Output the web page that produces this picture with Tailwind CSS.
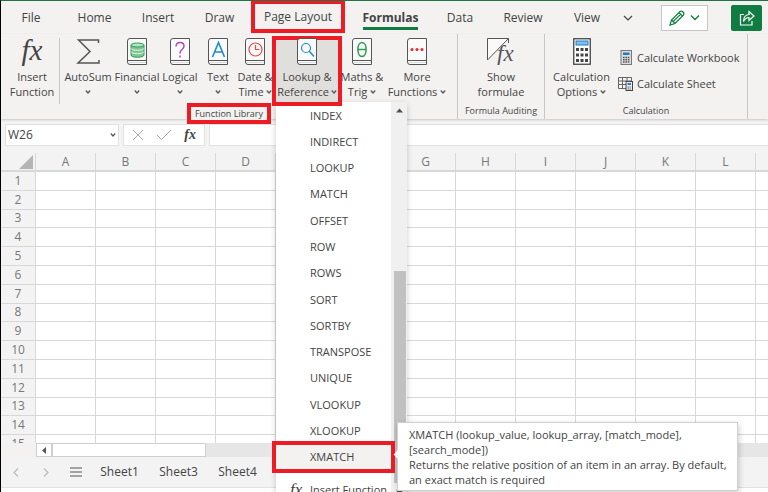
<!DOCTYPE html>
<html lang="en">
  <head>
    <meta charset="UTF-8" />
    <meta name="viewport" content="width=device-width, initial-scale=1.0" />
    <title>Formulas</title>
    <script src="https://cdn.jsdelivr.net/npm/@tailwindcss/browser@4"></script>
  </head>
  <body class="bg-white">
    <!-- shared icon shapes -->
    <svg class="hidden">
      <symbol id="book" viewBox="0 0 20 27">
        <path d="M19.500 .5H3Q.5 .5 .5 3V24Q.5 26.500 3 26.500H19.500Z" fill="#fafafa" stroke="#555" />
        <path d="M1 22.500H19.500" stroke="#555" fill="none" />
        <path d="M2 24.500H19" stroke="#ddd" fill="none" />
      </symbol>
      <symbol id="chev" viewBox="0 0 6 6">
        <path d="M.8 1.500L3 4L5.200 1.500" fill="none" stroke="#555" stroke-width="1.200" />
      </symbol>
    </svg>

    <main
      class="flex h-screen flex-col overflow-hidden border-t border-l border-t-[#217346] border-l-black bg-[#f3f2f1] font-['Open_Sans','Noto_Sans',sans-serif] text-[11px] text-[#444]"
    >
      <!-- tabs -->
      <nav class="flex h-[33px] shrink-0 items-center text-[12px]">
        <button class="w-[60px]">File</button>
        <button class="w-[67px]">Home</button>
        <button class="w-[60px]">Insert</button>
        <button class="w-[63px]">Draw</button>
        <button class="-mt-px h-[33px] w-[94px] self-start border-4 border-[#ed1c24]">Page Layout</button>
        <button class="relative w-[91px] font-bold">
          Formulas
          <span class="absolute -bottom-[3px] left-[18px] h-[3px] w-[55px] bg-[#107c41]"></span>
        </button>
        <button class="w-[48px]">Data</button>
        <button class="w-[78px]">Review</button>
        <button class="w-[50px]">View</button>
        <button class="flex w-[32px] justify-center" aria-label="More tabs">
          <svg class="h-2 w-3" viewBox="0 0 12 8"><path d="M2 2L6 6L10 2" fill="none" stroke="#444" stroke-width="1.200" /></svg>
        </button>
        <div class="ml-auto flex gap-[23px] pr-[6px]">
          <button class="flex h-[26px] w-[47px] items-center justify-center gap-[5px] border border-[#c8c6c4] bg-white" aria-label="Editing">
            <svg class="size-4" viewBox="0 0 16 16" fill="none" stroke="#107c41" stroke-width="1.200">
              <path d="M1 15L2.500 10L11 1.500Q12.500 .5 14 2Q15.500 3.500 14.500 5L6 13.500Z" />
              <path d="M2.500 10L6 13.500M4 11.800L12.300 3.600M10 2.600L13.500 6.100" />
            </svg>
            <svg class="h-[7px] w-[10px]" viewBox="0 0 10 7"><path d="M1 1.500L5 5.500L9 1.500" fill="none" stroke="#107c41" stroke-width="1.400" /></svg>
          </button>
          <button class="flex h-[26px] w-[31px] items-center justify-center rounded-[2px] bg-[#107c41]" aria-label="Share">
            <svg class="size-4" viewBox="0 0 16 16" fill="none" stroke="#fff" stroke-width="1.200">
              <path d="M5 4.500H1.500V15H13V11" />
              <path d="M4.500 11.500Q4.500 5 10 4.500V1.500L15 6L10 10.500V7.500Q6.500 7.500 4.500 11.500Z" />
            </svg>
          </button>
        </div>
      </nav>

      <!-- ribbon -->
      <section class="relative z-10 flex h-[85px] shrink-0 bg-[#f3f2f1] leading-[15px] shadow-[0_1px_2px_#c8c8c8]">
        <div class="flex w-[456px] flex-col items-center">
          <div class="flex h-[70px] w-full">
            <button class="flex w-[58px] flex-col items-center pt-[4px] pl-1">
              <span class="mb-1 h-[27px] font-['Liberation_Serif',serif] text-[29px] leading-[24px] italic">fx</span>
              Insert<br />Function
            </button>
            <span class="mt-1 h-[66px] w-px bg-[#c8c6c4]"></span>
            <button class="flex w-[56px] flex-col items-center pt-[4px]">
              <svg class="mb-1 h-[27px] w-6 shrink-0" viewBox="0 0 24 27"><path d="M22.500 5V2H2.500L14 13.500L2 25H23V22" fill="none" stroke="#555" stroke-width="1.500" /></svg>
              AutoSum
              <svg class="mt-[5px] size-[6px]"><use href="#chev" /></svg>
            </button>
            <button class="flex w-[42px] flex-col items-center pt-[4px]">
              <svg class="mb-1 h-[27px] w-5 shrink-0" viewBox="0 0 20 27">
                <use href="#book" />
                <path d="M4 7V17C4 20 17 20 17 17V7" fill="#7fc795" stroke="#2f9e51" />
                <ellipse cx="10.500" cy="7" rx="6.500" ry="2" fill="#b9e2c4" stroke="#2f9e51" />
                <path d="M4 10.300C4 13 17 13 17 10.300M4 13.600C4 16.300 17 16.300 17 13.600" fill="none" stroke="#e6f5ea" />
              </svg>
              Financial
              <svg class="mt-[5px] size-[6px]"><use href="#chev" /></svg>
            </button>
            <button class="flex w-[44px] flex-col items-center pt-[4px]">
              <svg class="mb-1 h-[27px] w-5 shrink-0" viewBox="0 0 20 27">
                <use href="#book" />
                <path d="M6 8.500Q6.200 4.500 10 4.500Q14 4.500 14 8Q14 10 12 11.500Q10 13 10 15.500M10 17.500V19.500" fill="none" stroke="#b146c2" stroke-width="1.500" />
              </svg>
              Logical
              <svg class="mt-[5px] size-[6px]"><use href="#chev" /></svg>
            </button>
            <button class="flex w-[32px] flex-col items-center pt-[4px]">
              <svg class="mb-1 h-[27px] w-5 shrink-0" viewBox="0 0 20 27">
                <use href="#book" />
                <path d="M4.500 19L10.500 4.500L16.500 19M6.500 14H14.500" fill="none" stroke="#1e8bcd" stroke-width="1.600" />
              </svg>
              Text
              <svg class="mt-[5px] size-[6px]"><use href="#chev" /></svg>
            </button>
            <button class="flex w-[42px] flex-col items-center pt-[4px]">
              <svg class="mb-1 h-[27px] w-5 shrink-0" viewBox="0 0 20 27">
                <use href="#book" />
                <circle cx="10.500" cy="11.500" r="6.500" fill="none" stroke="#e8484c" stroke-width="1.200" />
                <path d="M10.500 7V11.500H14.500" fill="none" stroke="#e8484c" stroke-width="1.200" />
              </svg>
              <span class="whitespace-nowrap">Date &amp;</span>
              <span class="flex items-center gap-[2px]">Time <svg class="size-[6px]"><use href="#chev" /></svg></span>
            </button>
            <div class="relative z-20 -mr-1 ml-[-4px] w-[70px]">
              <button class="mt-[2px] flex h-[70px] w-full flex-col items-center border-4 border-[#ed1c24] bg-[#e1dfdd]">
                <svg class="-mt-[2px] mb-1 h-[27px] w-5 shrink-0" viewBox="0 0 20 27">
                  <use href="#book" />
                  <circle cx="9" cy="10" r="4.500" fill="none" stroke="#1e8bcd" stroke-width="1.200" />
                  <path d="M12.300 13.300L17 18.500" stroke="#1e8bcd" stroke-width="1.500" />
                </svg>
                <span class="whitespace-nowrap">Lookup &amp;</span>
                <span class="flex items-center gap-[2px]">Reference <svg class="size-[6px]"><use href="#chev" /></svg></span>
              </button>

              <!-- lookup menu -->
              <div class="absolute top-[68px] left-1 -z-10 flex w-[131px] bg-white text-[11px] shadow-[0_2px_6px_#0003]">
                <div class="w-[115px]">
                  <ul class="grid h-[368px] auto-rows-fr" id="menu"></ul>
                  <div class="mx-2 mt-[2px] border-b border-[#d2d0ce]"></div>
                  <button class="flex h-[32px] w-full items-center pl-[14px] whitespace-nowrap">
                    <span class="w-5 text-left font-['Liberation_Serif',serif] text-[17px] italic">fx</span>Insert Function
                  </button>
                </div>
                <div class="flex w-4 flex-col items-center bg-[#f0f0f0] pl-px">
                  <svg class="mt-[6px] h-[5px] w-[7px]" viewBox="0 0 7 5"><path d="M0 4.500L3.500 .5L7 4.500Z" fill="#505050" /></svg>
                  <div class="mt-[158px] h-[212px] w-3 bg-[#c1c1c1]"></div>
                  <svg class="mt-[7px] h-[5px] w-[7px]" viewBox="0 0 7 5"><path d="M0 .5L3.500 4.500L7 .5Z" fill="#505050" /></svg>
                </div>

                <div role="tooltip" class="absolute top-[320px] left-[121px] h-[69px] w-[341px] border border-[#d2d0ce] bg-white pt-1 pl-[11px] whitespace-nowrap shadow-[1px_2px_6px_#0003]">
                  <span class="absolute top-[28px] -left-[3px] size-[7px] rotate-45 bg-white"></span>
                  <p>XMATCH (lookup_value, lookup_array, [match_mode],<br />[search_mode])</p>
                  <p>Returns the relative position of an item in an array. By default,<br />an exact match is required</p>
                </div>
              </div>
            </div>
            <button class="flex w-[48px] flex-col items-center pt-[4px]">
              <svg class="mb-1 h-[27px] w-5 shrink-0" viewBox="0 0 20 27">
                <use href="#book" />
                <path d="M10 4.500C4.500 4.500 4.500 18.500 10 18.500S15.500 4.500 10 4.500ZM6 11.500H14" fill="none" stroke="#2f9e51" stroke-width="1.500" />
              </svg>
              <span class="whitespace-nowrap">Maths &amp;</span>
              <span class="flex items-center gap-[3px]">Trig <svg class="size-[6px]"><use href="#chev" /></svg></span>
            </button>
            <button class="flex w-[62px] flex-col items-center pt-[4px]">
              <svg class="mb-1 h-[27px] w-5 shrink-0" viewBox="0 0 20 27">
                <use href="#book" />
                <g fill="#e8262b"><circle cx="5" cy="11.500" r="1.500" /><circle cx="10" cy="11.500" r="1.500" /><circle cx="15" cy="11.500" r="1.500" /></g>
              </svg>
              More
              <span class="flex items-center gap-[3px]">Functions <svg class="size-[6px]"><use href="#chev" /></svg></span>
            </button>
          </div>
          <span class="flex h-[21px] w-[84px] -translate-y-px shrink-0 items-center justify-center border-4 border-[#ed1c24] bg-[#f3f2f1] text-[9px] whitespace-nowrap">Function Library</span>
        </div>

        <div class="flex w-[87px] flex-col items-center border-l border-[#c8c6c4]">
          <button class="flex h-[70px] flex-col items-center pt-[4px]">
            <svg class="mb-1 h-[27px] w-[28px] shrink-0" viewBox="0 0 28 27">
              <path d="M.5 .5H21.500L.5 22Z" fill="#fafafa" stroke="#555" />
              <path d="M21.500 .5V5" stroke="#555" />
              <text x="10" y="23" font-family="Liberation Serif" font-style="italic" font-size="23" fill="#555">fx</text>
            </svg>
            Show<br />formulae
          </button>
          <span class="text-[9px] leading-[17px] whitespace-nowrap">Formula Auditing</span>
        </div>

        <div class="flex w-[204px] flex-col items-center border-x border-[#c8c6c4]">
          <div class="flex h-[70px] w-full">
            <button class="flex w-[73px] flex-col items-center pt-[4px]">
              <svg class="mb-1 h-[27px] w-[18px] shrink-0" viewBox="0 0 18 27">
                <rect x=".75" y=".75" width="16.500" height="25.500" fill="#fff" stroke="#444" stroke-width="1.300" />
                <rect x="3" y="3" width="12" height="4" fill="#83beec" stroke="#1e7ec8" />
                <path d="M3 11.500H15M3 17H15M3 22.500H15" stroke="#444" stroke-width="3" stroke-dasharray="3 1.500" />
              </svg>
              Calculation
              <span class="flex items-center gap-[3px]">Options <svg class="size-[6px]"><use href="#chev" /></svg></span>
            </button>
            <div class="flex flex-col gap-[11px] pt-[16px] whitespace-nowrap">
              <button class="flex items-center gap-1">
                <svg class="h-[15px] w-[15px]" viewBox="0 0 15 15">
                  <rect x="3" y=".5" width="10.500" height="14" fill="#ddd" stroke="#777" />
                  <rect x="5" y="2.500" width="6.500" height="2.500" fill="#1e7ec8" />
                  <path d="M5 7.500H12M5 9.800H12M5 12H12" stroke="#555" stroke-width="1.400" stroke-dasharray="1.600 .8" />
                </svg>
                Calculate Workbook
              </button>
              <button class="flex items-center gap-1">
                <svg class="h-[15px] w-[15px]" viewBox="0 0 15 15">
                  <path d="M.5 1.500H13.500V12.500H.5ZM.5 5H13.500M.5 8.500H13.500M4.500 1.500V12.500M9 1.500V12.500" fill="#f5f5f5" stroke="#666" />
                  <rect x="8" y="5.500" width="6.500" height="9" fill="#eee" stroke="#444" />
                  <rect x="9.500" y="7" width="3.500" height="2" fill="#1e7ec8" />
                  <path d="M9.500 11H13M9.500 13H13" stroke="#555" stroke-dasharray="1.300 .7" />
                </svg>
                Calculate Sheet
              </button>
            </div>
          </div>
          <span class="text-[9px] leading-[17px]">Calculation</span>
        </div>
      </section>

      <!-- formula bar -->
      <div class="flex h-[34px] shrink-0 gap-1 bg-[#f3f3f3] pt-[5px] pl-1">
        <div class="flex h-[22px] w-[114px] items-center border border-[#e1e1e1] bg-white pr-[2px] pl-[2px]">
          <input aria-label="Name box" value="W26" class="w-full min-w-0 text-[12px] outline-none" />
          <button aria-label="Open name list"><svg class="size-[6px]"><use href="#chev" /></svg></button>
        </div>
        <div class="flex h-[22px] w-[82px] items-center justify-between border border-[#e1e1e1] bg-white px-2">
          <button aria-label="Cancel"><svg class="size-3" viewBox="0 0 12 12"><path d="M1 1L11 11M11 1L1 11" stroke="#aaa" /></svg></button>
          <button aria-label="Enter"><svg class="h-3 w-4" viewBox="0 0 16 12"><path d="M1 6L5.500 10.500L15 1" fill="none" stroke="#aaa" /></svg></button>
          <button class="font-['Liberation_Serif',serif] text-[14px] leading-none font-bold italic">fx</button>
        </div>
        <input aria-label="Formula" class="h-[22px] min-w-0 flex-1 border border-r-0 border-[#e1e1e1] bg-white outline-none" />
      </div>

      <!-- sheet -->
      <div class="min-h-0 flex-1 overflow-hidden bg-white">
        <table class="h-[301px] w-[815px] table-fixed border-separate border-spacing-0 text-center text-[12px] leading-[16px] text-[#777]">
          <thead>
            <tr id="cols" class="h-[19px]"></tr>
          </thead>
          <tbody id="rows"></tbody>
        </table>
      </div>
      <div class="ml-[35px] flex h-[14px] shrink-0 bg-[#e6e6e6]">
        <button class="flex w-4 items-center justify-center border border-[#cfcfcf] bg-white" aria-label="Scroll left">
          <svg class="h-[7px] w-[4px]" viewBox="0 0 4 7"><path d="M4 0L0 3.500L4 7Z" fill="#555" /></svg>
        </button>
        <div class="w-[154px] border border-[#cfcfcf] bg-white"></div>
      </div>
      <footer class="flex h-[31px] shrink-0 items-center border-b border-[#e1e1e1] bg-[#f3f3f3] text-[12px]">
        <button class="flex w-[29px] justify-center" aria-label="Previous sheet"><svg class="h-[9px] w-[6px]" viewBox="0 0 6 9"><path d="M5 .5L1 4.500L5 8.500" fill="none" stroke="#bbb" stroke-width="1.200" /></svg></button>
        <button class="flex w-[32px] justify-center" aria-label="Next sheet"><svg class="h-[9px] w-[6px]" viewBox="0 0 6 9"><path d="M1 .5L5 4.500L1 8.500" fill="none" stroke="#bbb" stroke-width="1.200" /></svg></button>
        <button class="flex w-[28px] justify-center" aria-label="All sheets"><svg class="h-[10px] w-3" viewBox="0 0 12 10"><path d="M0 1H12M0 5H12M0 9H12" stroke="#555" stroke-width="1.200" /></svg></button>
        <button class="w-[59px]">Sheet1</button>
        <button class="w-[59px]">Sheet3</button>
        <button class="w-[59px]">Sheet4</button>
      </footer>
      <div class="h-1 shrink-0 bg-white"></div>
    </main>

    <script>
      const names = [
        "INDEX", "INDIRECT", "LOOKUP", "MATCH", "OFFSET", "ROW", "ROWS",
        "SORT", "SORTBY", "TRANSPOSE", "UNIQUE", "VLOOKUP", "XLOOKUP",
      ];
      const menu = document.querySelector("#menu");
      for (const name of names) {
        menu.innerHTML += `<li class="flex"><button class="w-full pl-[34px] text-left">${name}</button></li>`;
      }
      menu.innerHTML += `<li class="relative flex bg-[#f3f2f1]">
        <button class="w-full pl-[34px] text-left">XMATCH</button>
        <span class="pointer-events-none absolute -inset-x-1 -top-[3px] -bottom-[3px] border-4 border-[#ed1c24]"></span>
      </li>`;

      // last column is only partly in view, so it has no letter
      const letters = [..."ABCDEFGHIJKL", ""];
      document.querySelector("#cols").innerHTML =
        `<th class="w-[35px] border-r border-b-2 border-[#d8d8d8] bg-[#f3f3f3] p-0"><svg class="ml-[18px] h-[14px] w-[14px]" viewBox="0 0 14 14"><path d="M14 0V14H0Z" fill="#b5b5b5" /></svg></th>` +
        letters
          .map((l) => `<th class="w-[60px] border-r border-b-2 border-[#d8d8d8] bg-[#f3f3f3] p-0 font-normal">${l}</th>`)
          .join("");

      const rows = document.querySelector("#rows");
      for (let i = 1; i <= 15; i++) {
        rows.innerHTML +=
          `<tr><th class="border-r border-b border-[#d8d8d8] bg-[#f3f3f3] p-0 font-normal">${i}</th>` +
          letters.map(() => `<td class="border-r border-b border-[#d8d8d8] p-0"></td>`).join("") +
          "</tr>";
      }
    </script>
  </body>
</html>
